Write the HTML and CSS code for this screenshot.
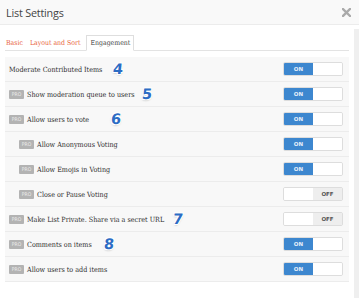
FILE: index.html
```html
<!DOCTYPE html>
<html>
<head>
<meta charset="utf-8">
<link rel="stylesheet" href="styles.css">
</head>
<body>
<div class="dialog">
  <div class="header">
    <span class="title">List Settings</span>
    <svg class="close" width="9" height="9" viewBox="0 0 9 9"><path d="M1 1L8 8M8 1L1 8" stroke="#aaa" stroke-width="2.4" stroke-linecap="square"/></svg>
  </div>
  <div class="main">
    <div class="content">
      <div class="tabs">
        <span class="tab">Basic</span>
        <span class="tab">Layout and Sort</span>
        <span class="tab active">Engagement</span>
      </div>
      <div class="rows">
        <div class="row"><span class="label">Moderate Contributed Items<span class="num n4">4</span></span><span class="toggle on"><span class="a">ON</span><span class="b"></span></span></div>
        <div class="row"><span class="label"><span class="pro">PRO</span>Show moderation queue to users<span class="num n5">5</span></span><span class="toggle on"><span class="a">ON</span><span class="b"></span></span></div>
        <div class="row"><span class="label"><span class="pro">PRO</span>Allow users to vote<span class="num n6">6</span></span><span class="toggle on"><span class="a">ON</span><span class="b"></span></span></div>
        <div class="row sub"><span class="label"><span class="pro">PRO</span>Allow Anonymous Voting</span><span class="toggle on"><span class="a">ON</span><span class="b"></span></span></div>
        <div class="row sub"><span class="label"><span class="pro">PRO</span>Allow Emojis in Voting</span><span class="toggle on"><span class="a">ON</span><span class="b"></span></span></div>
        <div class="row sub"><span class="label"><span class="pro">PRO</span>Close or Pause Voting</span><span class="toggle off"><span class="a"></span><span class="b">OFF</span></span></div>
        <div class="row"><span class="label"><span class="pro">PRO</span>Make List Private. Share via a secret URL<span class="num n7">7</span></span><span class="toggle off"><span class="a"></span><span class="b">OFF</span></span></div>
        <div class="row"><span class="label"><span class="pro">PRO</span>Comments on items<span class="num n8">8</span></span><span class="toggle on"><span class="a">ON</span><span class="b"></span></span></div>
        <div class="row"><span class="label"><span class="pro">PRO</span>Allow users to add items</span><span class="toggle on"><span class="a">ON</span><span class="b"></span></span></div>
      </div>
    </div>
    <div class="track"></div>
  </div>
</div>
</body>
</html>
```
FILE: styles.css
```css
html, body { margin: 0; padding: 0; background: #fff; }
.dialog { width: 359px; height: 298px; overflow: hidden; font-family: "DejaVu Serif Condensed", "DejaVu Serif", serif; font-stretch: condensed; }
.header {
  height: 25px; background: #f9f9f9; border-bottom: 1px solid #ececec;
  display: flex; align-items: center; justify-content: space-between;
  padding: 0 8px 0 6px; box-sizing: border-box;
}
.title { font-family: "Open Sans", sans-serif; font-size: 10.8px; color: #444; font-stretch: normal; letter-spacing: -0.2px; }
.close { display: block; }
.main { display: flex; padding-top: 4px; }
.content { width: 344px; padding-left: 5px; }
.track { width: 5px; margin-left: 5px; background: #efefef; height: 270px; }
.tabs {
  display: flex; align-items: flex-end; height: 20px; margin-top: 1px;
  border-bottom: 1px solid #e3e3e3; font-size: 6.9px;
}
.tab { color: #e8643c; padding: 0 3px 0 1px; line-height: 14px; margin-right: 3px; }
.tab.active {
  color: #444; background: #fff; border: 1px solid #dedede; border-bottom: 1px solid #fff;
  margin-bottom: -1px; padding: 0 3px;
}
.rows { margin-top: 6px; }
.row {
  height: 25px; box-sizing: border-box; background: #f8f8f8; border-bottom: 1px solid #ececec;
  display: flex; align-items: center; justify-content: space-between;
  padding: 0 6px 0 4px;
}
.row.sub { padding-left: 14px; }
.label { display: flex; align-items: center; font-size: 7.15px; color: #2e2e2e; }
.pro {
  display: inline-block; background: #b3b3b3; color: #eee; font-size: 5px; font-family: "DejaVu Sans", sans-serif;
  width: 15px; height: 9px; line-height: 9px; text-align: center; margin-right: 3px; border-radius: 1px;
}
.num {
  font-family: "DejaVu Sans", sans-serif; font-weight: bold; font-size: 14.5px; color: #2c6cc4;
  line-height: 14px; font-stretch: normal; transform: skewX(-6deg);
  text-shadow: -1px -1px 0 #fff, 1px -1px 0 #fff, -1px 1px 0 #fff, 1px 1px 0 #fff, 0 1px 2px rgba(0,0,0,0.4);
}
.n4 { margin-left: 11px; }
.n5 { margin-left: 7px; }
.n6 { margin-left: 22px; }
.n7 { margin-left: 9px; }
.n8 { margin-left: 12px; }
.toggle {
  display: flex; width: 60px; height: 14px; box-sizing: border-box;
  border: 1px solid #ddd; border-radius: 2px; overflow: hidden; font-family: "DejaVu Sans", sans-serif;
  font-size: 5.5px; font-weight: bold; font-stretch: normal;
}
.toggle .a, .toggle .b { display: flex; align-items: center; justify-content: center; }
.toggle .a { width: 29px; }
.toggle .b { flex: 1; }
.toggle.on .a { background: #3d87cf; color: #e8f0fa; }
.toggle.on .b { background: #fff; }
.toggle.off .a { background: #fff; }
.toggle.off .b { background: #eeeeee; color: #555; }
```
